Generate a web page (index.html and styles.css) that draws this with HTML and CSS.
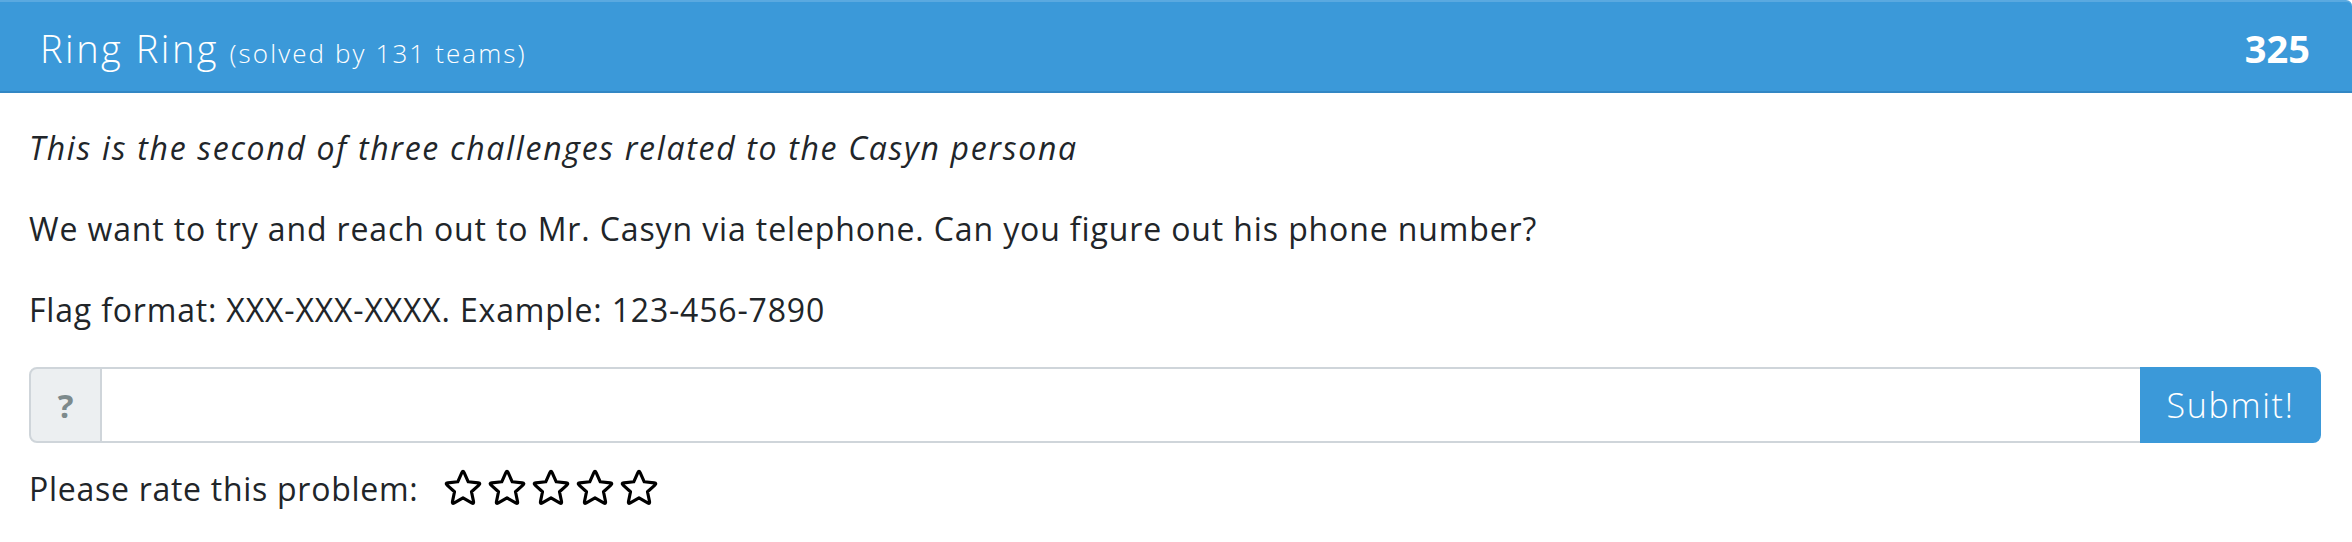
FILE: index.html
```html
<!DOCTYPE html>
<html lang="en">
<head>
<meta charset="utf-8">
<title>Ring Ring</title>
<link rel="stylesheet" href="styles.css">
</head>
<body>
<div class="card">
  <div class="card-header">
    <span class="title">Ring Ring <small class="solved">(solved by 131 teams)</small></span>
    <span class="points">325</span>
  </div>
  <div class="card-body">
    <p class="desc"><em class="lead-note">This is the second of three challenges related to the Casyn persona</em></p>
    <p class="desc">We want to try and reach out to Mr. Casyn via telephone. Can you figure out his phone number?</p>
    <p class="desc flag-line">Flag format: XXX-XXX-XXXX. Example: 123-456-7890</p>
    <form class="input-group">
      <span class="addon">?</span>
      <input class="flag-input" type="text" aria-label="flag">
      <button class="submit" type="button">Submit!</button>
    </form>
    <div class="rating">
      <span class="rating-label">Please rate this problem:</span>
      <span class="stars">
        <svg class="star" viewBox="-20 -20 40 40"><path d="M1.1,-15.55 L5,-6.88 L14.45,-5.85 Q17.12,-5.56 15.13,-3.76 L8.08,2.63 L10.03,11.94 Q10.58,14.56 8.25,13.23 L0,8.5 L-8.25,13.23 Q-10.58,14.56 -10.03,11.94 L-8.08,2.63 L-15.13,-3.76 Q-17.12,-5.56 -14.45,-5.85 L-5,-6.88 L-1.1,-15.55 Q0,-18 1.1,-15.55 Z"/></svg>
        <svg class="star" viewBox="-20 -20 40 40"><path d="M1.1,-15.55 L5,-6.88 L14.45,-5.85 Q17.12,-5.56 15.13,-3.76 L8.08,2.63 L10.03,11.94 Q10.58,14.56 8.25,13.23 L0,8.5 L-8.25,13.23 Q-10.58,14.56 -10.03,11.94 L-8.08,2.63 L-15.13,-3.76 Q-17.12,-5.56 -14.45,-5.85 L-5,-6.88 L-1.1,-15.55 Q0,-18 1.1,-15.55 Z"/></svg>
        <svg class="star" viewBox="-20 -20 40 40"><path d="M1.1,-15.55 L5,-6.88 L14.45,-5.85 Q17.12,-5.56 15.13,-3.76 L8.08,2.63 L10.03,11.94 Q10.58,14.56 8.25,13.23 L0,8.5 L-8.25,13.23 Q-10.58,14.56 -10.03,11.94 L-8.08,2.63 L-15.13,-3.76 Q-17.12,-5.56 -14.45,-5.85 L-5,-6.88 L-1.1,-15.55 Q0,-18 1.1,-15.55 Z"/></svg>
        <svg class="star" viewBox="-20 -20 40 40"><path d="M1.1,-15.55 L5,-6.88 L14.45,-5.85 Q17.12,-5.56 15.13,-3.76 L8.08,2.63 L10.03,11.94 Q10.58,14.56 8.25,13.23 L0,8.5 L-8.25,13.23 Q-10.58,14.56 -10.03,11.94 L-8.08,2.63 L-15.13,-3.76 Q-17.12,-5.56 -14.45,-5.85 L-5,-6.88 L-1.1,-15.55 Q0,-18 1.1,-15.55 Z"/></svg>
        <svg class="star" viewBox="-20 -20 40 40"><path d="M1.1,-15.55 L5,-6.88 L14.45,-5.85 Q17.12,-5.56 15.13,-3.76 L8.08,2.63 L10.03,11.94 Q10.58,14.56 8.25,13.23 L0,8.5 L-8.25,13.23 Q-10.58,14.56 -10.03,11.94 L-8.08,2.63 L-15.13,-3.76 Q-17.12,-5.56 -14.45,-5.85 L-5,-6.88 L-1.1,-15.55 Q0,-18 1.1,-15.55 Z"/></svg>
      </span>
    </div>
  </div>
</div>
</body>
</html>
```

FILE: styles.css
```css
* { box-sizing: border-box; }
body {
  margin: 0;
  background: #fff;
  font-family: "Open Sans", "DejaVu Sans", sans-serif;
  font-weight: 400;
  color: #212529;
}
.card { width: 100%; }
.card-header {
  display: flex;
  justify-content: space-between;
  align-items: baseline;
  background: #3b99d9;
  color: #fff;
  border-top: 2px solid #5aa9e0;
  border-bottom: 2px solid #3287c4;
  border-top-right-radius: 6px;
  padding: 25px 42px 21px 40px;
  line-height: 43px;
  height: 93px;
}
.title { font-size: 38px; font-weight: 300; letter-spacing: 2.5px; }
.solved { font-size: 26px; font-weight: 300; letter-spacing: 2.1px; margin-left: -2px; }
.points { font-size: 38px; font-weight: 700; }
.card-body { padding: 31px 31px 0 29px; }
.desc {
  margin: 0 0 33px;
  font-size: 32px;
  line-height: 48px;
  letter-spacing: 0.88px;
}
.flag-line { letter-spacing: 0.82px; }
.lead-note { letter-spacing: 1.69px; }
.input-group {
  display: flex;
  height: 76px;
  margin: 0;
}
.addon {
  width: 73px;
  display: flex;
  align-items: center;
  justify-content: center;
  background: #eceff1;
  border: 2px solid #cfd5da;
  border-radius: 8px 0 0 8px;
  color: #7d8a8c;
  font-weight: 700;
  font-size: 33px;
}
.flag-input {
  flex: 1;
  border: 2px solid #cfd5da;
  border-left: none;
  border-right: none;
  outline: none;
  font: inherit;
}
.submit {
  width: 181px;
  background: #3b99d9;
  color: #fff;
  border: none;
  border-radius: 0 8px 8px 0;
  font-family: inherit;
  font-weight: 300;
  font-size: 34px;
  letter-spacing: 1.7px;
}
.rating {
  display: flex;
  align-items: center;
  margin-top: 22px;
  font-size: 32px;
  line-height: 48px;
}
.rating-label { letter-spacing: 0.72px; }
.stars { display: flex; gap: 2px; margin-left: 24px; }
.star { width: 42px; height: 42px; }
.star path {
  fill: none;
  stroke: #000;
  stroke-width: 3;
  stroke-linejoin: round;
}
```
